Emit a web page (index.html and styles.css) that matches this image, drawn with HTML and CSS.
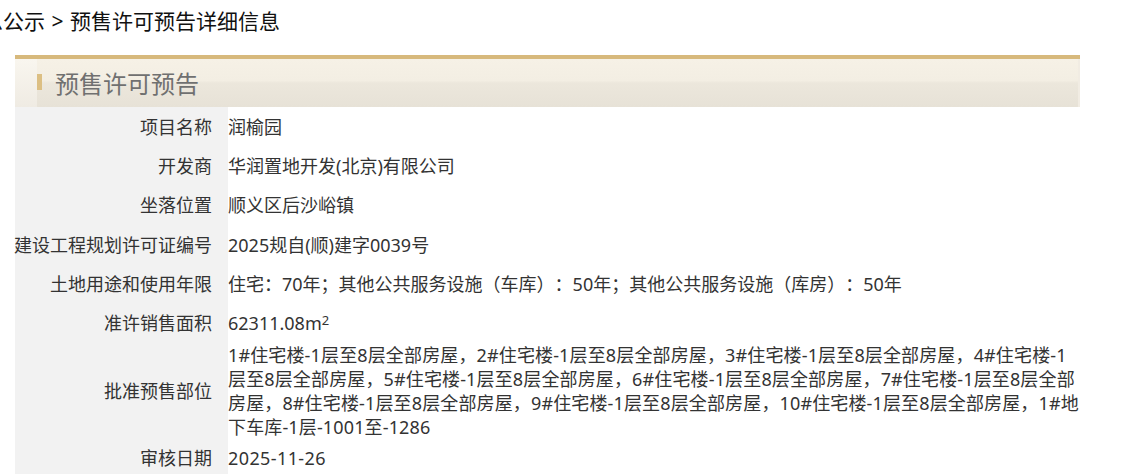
FILE: index.html
```html
<!DOCTYPE html>
<html lang="zh-CN">
<head>
    <meta charset="UTF-8">
    <meta name="viewport" content="width=device-width, initial-scale=1.0">
    <title>预售许可预告详细信息</title>
    <link rel="stylesheet" href="styles.css">
</head>
<body>

    <div class="crumb">信息公示 &gt; 预售许可预告详细信息</div>

    <div class="panel">
        <div class="panel-head">
            <span class="head-cap"></span>
            <span class="head-mark"></span>
            <h2 class="head-title">预售许可预告</h2>
        </div>

        <div class="info">
            <div class="label">项目名称</div>
            <div class="value">润榆园</div>

            <div class="label">开发商</div>
            <div class="value">华润置地开发(北京)有限公司</div>

            <div class="label">坐落位置</div>
            <div class="value">顺义区后沙峪镇</div>

            <div class="label">建设工程规划许可证编号</div>
            <div class="value">2025规自(顺)建字0039号</div>

            <div class="label">土地用途和使用年限</div>
            <div class="value">住宅：70年；其他公共服务设施（车库）：50年；其他公共服务设施（库房）：50年</div>

            <div class="label">准许销售面积</div>
            <div class="value">62311.08m<sup>2</sup></div>

            <div class="label">批准预售部位</div>
            <div class="value value-long">1#住宅楼-1层至8层全部房屋，2#住宅楼-1层至8层全部房屋，3#住宅楼-1层至8层全部房屋，4#住宅楼-1层至8层全部房屋，5#住宅楼-1层至8层全部房屋，6#住宅楼-1层至8层全部房屋，7#住宅楼-1层至8层全部房屋，8#住宅楼-1层至8层全部房屋，9#住宅楼-1层至8层全部房屋，10#住宅楼-1层至8层全部房屋，1#地下车库-1层-1001至-1286</div>

            <div class="label">审核日期</div>
            <div class="value value-date">2025-11-26</div>
        </div>
    </div>

</body>
</html>
```

FILE: styles.css
```css
/* General */
body {
    margin: 0;
    font-family: "Noto Sans", "Noto Sans CJK SC", sans-serif;
    color: #333;
    background: #fff;
    overflow: hidden;
    text-spacing-trim: space-all;
}

.crumb {
    height: 42px;
    line-height: 42px;
    font-size: 21px;
    color: #111;
    margin-left: -39px;
    white-space: nowrap;
    word-spacing: 1px;
}

/* Panel */
.panel {
    width: 1065px;
    margin: 13px 0 0 15px;
}

.panel-head {
    display: flex;
    align-items: center;
    height: 48px;
    border-top: 4px solid #d7b97c;
    background: linear-gradient(#f6f1e6 0%, #f3eee3 45%, #ece7dc 50%, #e7e2d7 100%);
    box-shadow: inset -2px 0 0 #f1ece3;
}

.head-cap {
    align-self: stretch;
    width: 22px;
    background: linear-gradient(#f9f6ef, #efebe3);
}

.head-mark {
    width: 5px;
    height: 16px;
    background: #dcbf83;
    margin-bottom: 3px;
}

.head-title {
    margin: 0 0 2px 13px;
    font-size: 24px;
    font-weight: normal;
    color: #707070;
}

/* Info rows */
.info {
    display: grid;
    grid-template-columns: 213px 1fr;
    grid-auto-rows: minmax(39.3px, auto);
    font-size: 18px;
    line-height: 24px;
}

.label {
    display: flex;
    align-items: center;
    justify-content: flex-end;
    padding-right: 16px;
    background: #f2f2f2;
    color: #333;
    white-space: nowrap;
}

.value {
    display: flex;
    align-items: center;
    color: #333;
}

.value-long {
    letter-spacing: 0.14px;
}

.value-date {
    letter-spacing: 0.4px;
}

.value sup {
    font-size: 13px;
    line-height: 0;
    position: relative;
    top: -3px;
}
```
